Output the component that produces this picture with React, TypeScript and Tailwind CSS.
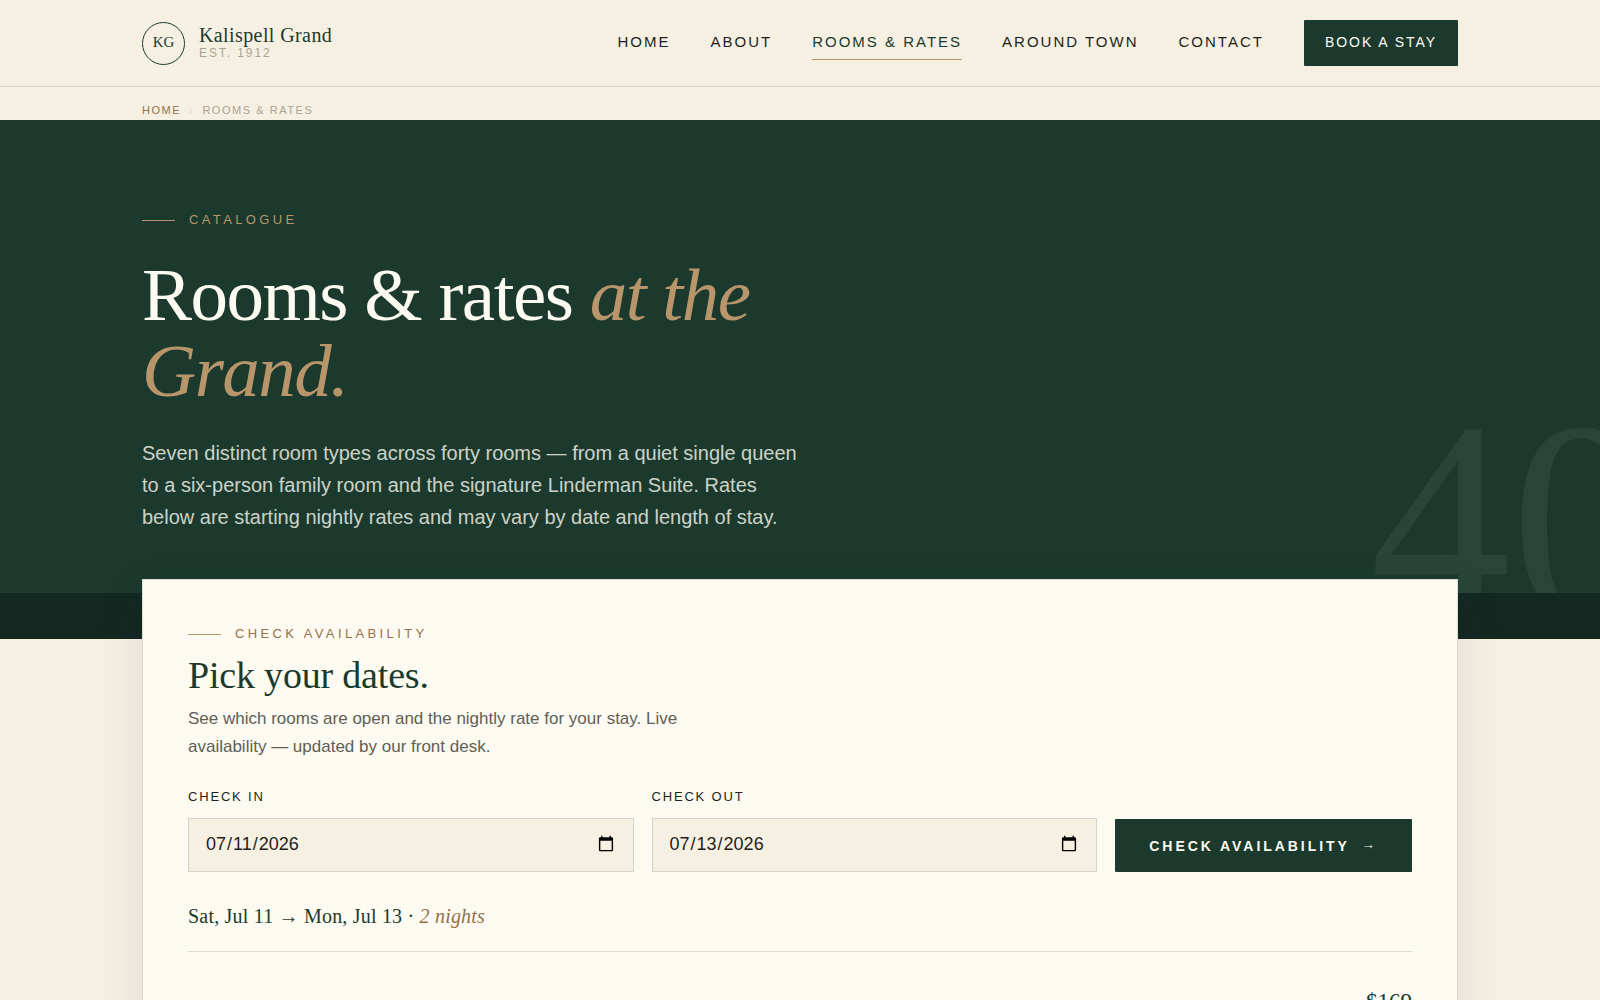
import React, { useState } from "react";

const navItems = [
  { label: "Home", href: "#home" },
  { label: "About", href: "#about" },
  { label: "Rooms & Rates", href: "#rooms", active: true },
  { label: "Around Town", href: "#around-town" },
  { label: "Contact", href: "#contact" },
];

const DAY = 24 * 60 * 60 * 1000;

function formatDay(value: string) {
  return new Date(`${value}T00:00:00Z`).toLocaleDateString("en-US", {
    weekday: "short",
    month: "short",
    day: "numeric",
    timeZone: "UTC",
  });
}

function Container({ children, className = "" }: { children: React.ReactNode; className?: string }) {
  return <div className={`mx-auto w-full max-w-[1400px] px-[42px] ${className}`}>{children}</div>;
}

function Eyebrow({ children, className = "" }: { children: React.ReactNode; className?: string }) {
  return (
    <p className={`flex items-center gap-3.5 text-[13px] leading-5 tracking-[0.26em] uppercase ${className}`}>
      <span className="h-px w-[33px] bg-[#b8956a]" />
      {children}
    </p>
  );
}

function Header() {
  return (
    <header className="border-b border-[#dfd8c8]">
      <Container className="flex items-center justify-between py-5">
        <a href="#home" className="flex items-center gap-3.5 text-[#1b3a2d]">
          <span className="flex size-[43px] items-center justify-center rounded-full border border-[#1b3a2d] pb-0.5 font-['Liberation_Serif',serif] text-[15px]">
            KG
          </span>
          <span className="flex flex-col">
            <span className="font-['Liberation_Serif',serif] text-xl leading-5 tracking-[0.02em]">Kalispell Grand</span>
            <span className="text-xs leading-4 tracking-[0.16em] text-[#a8a493] uppercase">Est. 1912</span>
          </span>
        </a>

        <nav className="flex items-center gap-10">
          {navItems.map((item) => (
            <a
              key={item.label}
              href={item.href}
              className={`border-b pt-[5px] pb-[7px] text-[15px] leading-5 tracking-[2px] uppercase ${
                item.active ? "border-[#b8956a] text-[#1b3a2d]" : "border-transparent text-[#1f1f1b]"
              }`}
            >
              {item.label}
            </a>
          ))}
          <a
            href="#book"
            className="rounded-[1px] bg-[#1b3a2d] px-[21px] pt-3 pb-3.5 text-sm leading-5 tracking-[0.14em] text-[#fdfaf1] uppercase"
          >
            Book a stay
          </a>
        </nav>
      </Container>
    </header>
  );
}

function Breadcrumb() {
  return (
    <nav aria-label="Breadcrumb">
      <Container className="flex gap-2 pt-[15px] pb-0.5 text-[11px] leading-4 tracking-[0.14em] uppercase">
        <a href="#home" className="text-[#94714b]">
          Home
        </a>
        <span className="text-[#d8d3c3]">›</span>
        <span className="text-[#a8a493]">Rooms &amp; Rates</span>
      </Container>
    </nav>
  );
}

function Hero() {
  return (
    <section className="relative overflow-hidden bg-[#1b3a2d] pt-[90px] pb-[60px]">
      <span
        aria-hidden="true"
        className="absolute -right-[52px] -bottom-[68px] font-['Liberation_Serif',serif] text-[282px] leading-none text-[#fdfaf1]/6 select-none"
      >
        40
      </span>
      <Container>
        <Eyebrow className="text-[#b8956a]">Catalogue</Eyebrow>
        <h1 className="mt-[27px] max-w-[780px] font-['Liberation_Serif',serif] text-[75px] leading-[76px] tracking-[-0.02em] text-[#fdfaf1]">
          Rooms &amp; rates <em className="text-[#b8956a]">at the Grand.</em>
        </h1>
        <p className="mt-[28px] max-w-[660px] text-xl leading-8 text-[#fdfaf1]/80">
          Seven distinct room types across forty rooms — from a quiet single queen to a six-person family room and the
          signature Linderman Suite. Rates below are starting nightly rates and may vary by date and length of stay.
        </p>
      </Container>
    </section>
  );
}

interface DateFieldProps {
  id: string;
  label: string;
  value: string;
  onChange: (value: string) => void;
}

function DateField({ id, label, value, onChange }: DateFieldProps) {
  return (
    <div className="flex flex-col gap-[11px]">
      <label htmlFor={id} className="text-[13px] leading-5 tracking-[0.14em] text-[#1f1f1b] uppercase">
        {label}
      </label>
      <input
        id={id}
        type="date"
        value={value}
        onChange={(e) => onChange(e.target.value)}
        className="h-[54px] w-full border border-[#1b3a2d]/15 bg-[#f6f0e2] px-4 pb-0.5 text-lg text-[#1f1f1b]"
      />
    </div>
  );
}

function Availability() {
  const [checkIn, setCheckIn] = useState("2026-07-11");
  const [checkOut, setCheckOut] = useState("2026-07-13");
  const nights = Math.round((Date.parse(checkOut) - Date.parse(checkIn)) / DAY);

  return (
    <div className="relative -mt-[60px] border border-[#1b3a2d]/15 bg-[#fdfaf1] px-[45px] pt-11 pb-[45px] shadow-[0_16px_44px_rgba(27,58,45,0.1)]">
      <Eyebrow className="text-[#94714b]">Check availability</Eyebrow>
      <h2 className="mt-2.5 font-['Liberation_Serif',serif] text-[38px] leading-[42px] tracking-[-0.005em] text-[#1b3a2d]">
        Pick your dates.
      </h2>
      <p className="mt-[9px] max-w-[510px] text-[17px] leading-7 text-[#5f5f58]">
        See which rooms are open and the nightly rate for your stay. Live availability — updated by our front desk.
      </p>

      <form className="mt-[26px] grid grid-cols-[3fr_3fr_2fr] items-end gap-[18px]" onSubmit={(e) => e.preventDefault()}>
        <DateField id="check-in" label="Check in" value={checkIn} onChange={setCheckIn} />
        <DateField id="check-out" label="Check out" value={checkOut} onChange={setCheckOut} />
        <button
          type="submit"
          className="flex h-[53px] items-center justify-center gap-3 rounded-[1px] bg-[#1b3a2d] text-sm font-bold tracking-[0.21em] text-[#fdfaf1] uppercase"
        >
          Check availability <span className="text-[13px]">→</span>
        </button>
      </form>

      {checkIn && checkOut && (
        <p className="mt-[30px] border-b border-[#1b3a2d]/15 pb-[21px] font-['Liberation_Serif',serif] text-xl leading-7 tracking-[0.01em] text-[#1b3a2d]">
          {formatDay(checkIn)} → {formatDay(checkOut)} · <em className="text-[#94714b]">{nights} nights</em>
        </p>
      )}

      <p className="mt-9 text-right font-['Liberation_Serif',serif] text-[23px] leading-7 text-[#1b3a2d]">$169</p>
    </div>
  );
}

export default function App() {
  return (
    <div className="min-h-screen bg-[#f6f0e2] font-['Liberation_Sans',sans-serif]">
      <Header />
      <Breadcrumb />
      <Hero />
      <div className="h-[46px] bg-[#142822]" />
      <Container>
        <Availability />
      </Container>
    </div>
  );
}
